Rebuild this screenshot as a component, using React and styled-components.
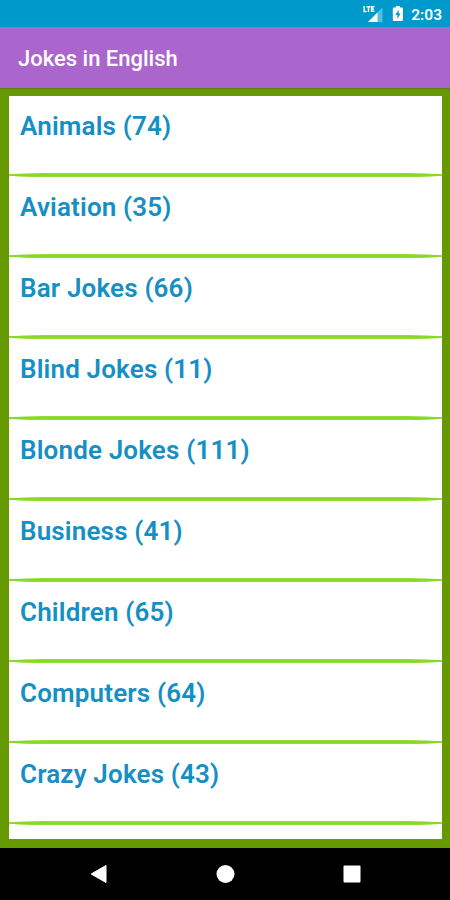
import styled, { createGlobalStyle } from "styled-components"

const GlobalStyle = createGlobalStyle`
	body {
		margin: 0;
		font-family: Roboto, "Liberation Sans", sans-serif;
	}
`

const categories = [
	{ name: "Animals", count: 74 },
	{ name: "Aviation", count: 35 },
	{ name: "Bar Jokes", count: 66 },
	{ name: "Blind Jokes", count: 11 },
	{ name: "Blonde Jokes", count: 111 },
	{ name: "Business", count: 41 },
	{ name: "Children", count: 65 },
	{ name: "Computers", count: 64 },
	{ name: "Crazy Jokes", count: 43 }
]

const Screen = styled.div`
	display: flex;
	flex-direction: column;
	width: 450px;
	height: 900px;
	overflow: hidden;
	background: #669900;
`

const StatusBar = styled.div`
	flex: none;
	display: flex;
	align-items: center;
	justify-content: flex-end;
	height: 27px;
	padding-right: 8px;
	box-sizing: border-box;
	background: #0099cc;
	color: #fff;
`

const Clock = styled.span`
	margin-left: 7px;
	padding-top: 2px;
	font-size: 15.5px;
	line-height: 20px;
	font-weight: 600;
`

const StatusIcon = styled.svg`
	flex: none;
	display: block;
	margin-left: ${props => props.$gap || 0}px;
`

const AppBar = styled.header`
	flex: none;
	display: flex;
	align-items: center;
	height: 61px;
	padding: 3px 18px 0;
	box-sizing: border-box;
	background: #aa66cc;
`

const Title = styled.h1`
	margin: 0;
	font-size: 22px;
	line-height: 28px;
	font-weight: 500;
	color: #fff;
`

const Content = styled.main`
	flex: 1;
	min-height: 0;
	display: flex;
	padding: 7px 8px 9px 9px;
	border-top: 1px solid #5c7f18;
	box-sizing: border-box;
`

const List = styled.ul`
	flex: 1;
	margin: 0;
	padding: 0;
	list-style: none;
	overflow: hidden;
	background: #fff;
`

const Row = styled.li`
	display: flex;
	flex-direction: column;
	justify-content: space-between;
	height: 81px;
	padding-top: 14px;
	box-sizing: border-box;
`

const RowTitle = styled.span`
	padding-left: 11px;
	font-size: 26px;
	line-height: 32px;
	font-weight: 600;
	letter-spacing: 0.16px;
	color: #168fc4;
`

const Divider = styled.svg`
	display: block;
	width: 100%;
	height: 4px;
`

const NavBar = styled.nav`
	flex: none;
	display: flex;
	align-items: center;
	justify-content: space-between;
	height: 52px;
	padding: 0 88px 0 89px;
	box-sizing: border-box;
	background: #000;
`

const SignalIcon = () => (
	<StatusIcon width="20" height="18" viewBox="0 0 20 18">
		<path d="M19.5 2.5v14.5H5z" fill="#fff" opacity="0.35" />
		<path d="M14.5 7.5v9.5H5z" fill="#fff" />
		<path d="M1.2 1v5.4h2.4M3.6 1.7h3.8M5.5 1.7v5.2M11.4 1.7H8.6v4.6H11.4M8.6 4h2.4" fill="none" stroke="#fff" strokeWidth="1.5" />
	</StatusIcon>
)

const BatteryIcon = () => (
	<StatusIcon $gap={9} width="12" height="17" viewBox="0 0 12 17">
		<path d="M3.8 1h4v1.5h2.1a1 1 0 0 1 1 1V15a1 1 0 0 1-1 1H1.8a1 1 0 0 1-1-1V3.5a1 1 0 0 1 1-1h2z" fill="#fff" />
		<path d="M6.6 4.5L3.4 10h2v4l3.2-5.5h-2z" fill="#0099cc" />
	</StatusIcon>
)

// Flat line that narrows to a point at both ends
const TaperedDivider = () => (
	<Divider viewBox="0 0 433 4" preserveAspectRatio="none">
		<path d="M0 1.6Q12 0 34 0H399Q421 0 433 1.6V2.4Q421 4 399 4H34Q12 4 0 2.4z" fill="#92de36" />
		<path d="M0 2H433" stroke="#86d422" strokeWidth="1.6" />
	</Divider>
)

function App() {
	return (
		<Screen>
			<GlobalStyle />
			<StatusBar>
				<SignalIcon />
				<BatteryIcon />
				<Clock>2:03</Clock>
			</StatusBar>
			<AppBar>
				<Title>Jokes in English</Title>
			</AppBar>
			<Content>
				<List>
					{categories.map(item => (
						<Row key={item.name}>
							<RowTitle>
								{item.name} ({item.count})
							</RowTitle>
							<TaperedDivider />
						</Row>
					))}
				</List>
			</Content>
			<NavBar>
				<svg width="20" height="20" viewBox="0 0 20 20">
					<path d="M17 1.5v17L2.2 10z" fill="#fff" stroke="#fff" strokeLinejoin="round" />
				</svg>
				<svg width="20" height="20" viewBox="0 0 20 20">
					<circle cx="9.5" cy="10" r="9" fill="#fff" />
				</svg>
				<svg width="20" height="20" viewBox="0 0 20 20">
					<rect x="1.5" y="1.5" width="17" height="17" rx="1" fill="#fff" />
				</svg>
			</NavBar>
		</Screen>
	)
}

export default App
